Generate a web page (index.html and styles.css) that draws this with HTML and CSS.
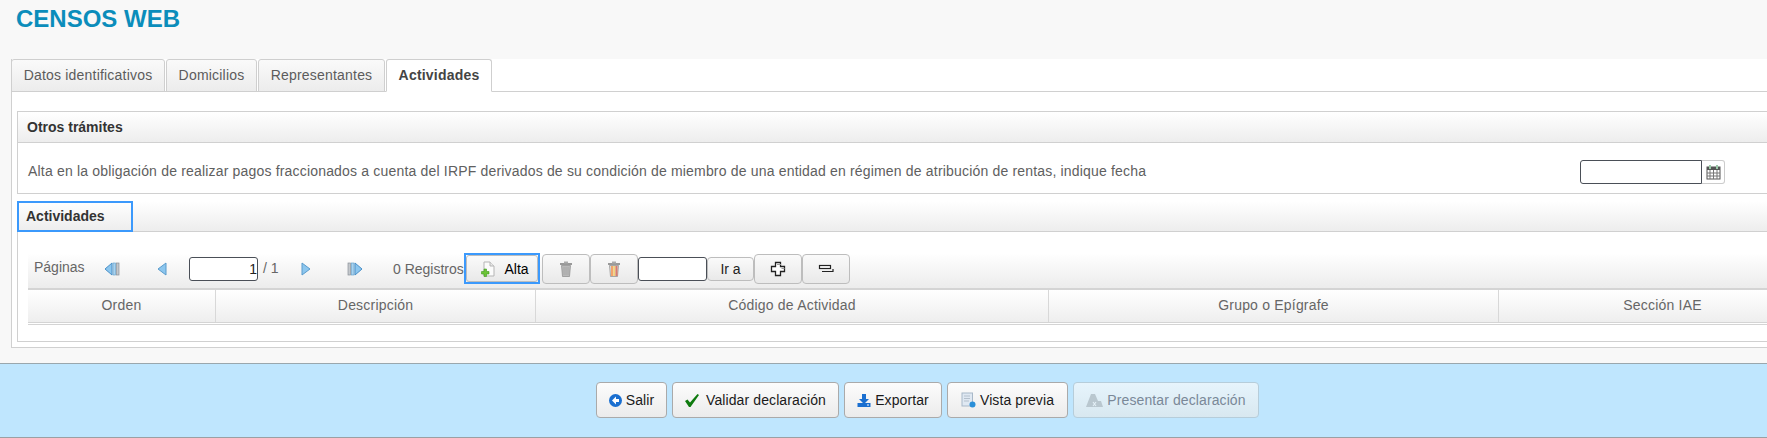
FILE: index.html
```html
<!DOCTYPE html>
<html lang="es">
<head>
<meta charset="utf-8">
<title>Censos Web</title>
<link rel="stylesheet" href="styles.css">
</head>
<body>
<header class="top"><h1 class="title">CENSOS WEB</h1></header>
<main class="sheet">
  <nav class="tabs">
    <a class="tab t1">Datos identificativos</a>
    <a class="tab t2">Domicilios</a>
    <a class="tab t3">Representantes</a>
    <a class="tab t4 active">Actividades</a>
  </nav>
  <div class="content">
    <section class="panel first">
      <h2 class="panel-head">Otros trámites</h2>
      <div class="row">
        <span class="row-text">Alta en la obligación de realizar pagos fraccionados a cuenta del IRPF derivados de su condición de miembro de una entidad en régimen de atribución de rentas, indique fecha</span>
        <span class="date"><input class="date-input" type="text" aria-label="Fecha"><button class="date-btn" aria-label="Calendario"><svg width="15" height="16" viewBox="0 0 15 16"><rect x="1" y="3" width="13" height="12" fill="#fff" stroke="#555"/><rect x="1" y="3" width="13" height="3" fill="#555"/><path d="M1 9h13M1 12h13M4 6v9M7.5 6v9M11 6v9" stroke="#777" fill="none"/><path d="M4 1v4M11 1v4" stroke="#9bc9a8" stroke-width="2"/></svg></button></span>
      </div>
    </section>
    <section class="panel second">
      <h2 class="panel-head"><span class="focus-head">Actividades</span></h2>
      <div class="list">
        <div class="toolbar">
          <span class="lbl pages">Páginas</span>
          <button class="nav n1" aria-label="Primera"><svg width="16" height="14" viewBox="0 0 16 14"><path d="M8 1v12L1 7z" fill="#8cc6ee" stroke="#4a90c8"/><rect x="9" y="1" width="2.5" height="12" fill="#a9d3f0" stroke="#6aa5cf" stroke-width=".7"/><rect x="12.5" y="1" width="2.5" height="12" fill="#c4c8cc" stroke="#8a9098" stroke-width=".7"/></svg></button>
          <button class="nav n2" aria-label="Anterior"><svg width="11" height="14" viewBox="0 0 11 14"><path d="M9 1v12L1 7z" fill="#8cc6ee" stroke="#5a9bcc"/></svg></button>
          <input class="page-input" type="text" value="1" aria-label="Página">
          <span class="lbl of">/ 1</span>
          <button class="nav n3" aria-label="Siguiente"><svg width="11" height="14" viewBox="0 0 11 14"><path d="M2 1v12l8-6z" fill="#8cc6ee" stroke="#5a9bcc"/></svg></button>
          <button class="nav n4" aria-label="Última"><svg width="16" height="14" viewBox="0 0 16 14"><rect x="1" y="1" width="2.5" height="12" fill="#c4c8cc" stroke="#8a9098" stroke-width=".7"/><rect x="4.5" y="1" width="2.5" height="12" fill="#a9d3f0" stroke="#6aa5cf" stroke-width=".7"/><path d="M8 1v12l7-6z" fill="#8cc6ee" stroke="#4a90c8"/></svg></button>
          <span class="lbl regs">0 Registros</span>
          <div class="focus-ring"><button class="btn alta"><svg class="alta-ico" width="14" height="16" viewBox="0 0 14 16"><path d="M3 1h6l4 4v10H3z" fill="#fbfbfb" stroke="#b5b5b5"/><path d="M9 1v4h4" fill="#e8e8e8" stroke="#b5b5b5"/><path d="M3 8h2.500v2.500H8V13H5.500v2.500H3V13H.5v-2.500H3z" fill="#6cc437" stroke="#3f9a1e" stroke-width=".6"/></svg>Alta</button></div>
          <button class="btn tool" aria-label="Borrar"><svg width="14" height="16" viewBox="0 0 14 16"><rect x="1" y="2" width="12" height="2" fill="#999"/><rect x="5" y="0.5" width="4" height="2" fill="#aaa"/><path d="M2.500 4.500h9l-1 11h-7z" fill="#b9b9b9" stroke="#8a8a8a" stroke-width=".7"/><path d="M5 6v8M7 6v8M9 6v8" stroke="#a8a8a8"/></svg></button>
          <button class="btn tool" aria-label="Borrar todo"><svg width="14" height="16" viewBox="0 0 14 16"><rect x="1" y="2" width="12" height="2" fill="#999"/><rect x="5" y="0.5" width="4" height="2" fill="#aaa"/><path d="M2.500 4.500h9l-1 11h-7z" fill="#ddd" stroke="#8a8a8a" stroke-width=".7"/><path d="M5 5v10" stroke="#f2a36b" stroke-width="2"/><path d="M7.300 5v10" stroke="#f3d27a" stroke-width="2"/><path d="M9.500 5v10" stroke="#d97b6c" stroke-width="2"/></svg></button>
          <input class="goto-input" type="text" aria-label="Ir a página">
          <button class="btn goto">Ir a</button>
          <button class="btn tool" aria-label="Expandir"><svg width="16" height="16" viewBox="0 0 16 16"><path d="M5.500 1.500h5v4h4v5h-4v4h-5v-4h-4v-5h4z" fill="#fff" stroke="#222" stroke-width="1.300"/><path d="M7 3.500h4M11.500 7.500h3" stroke="#999"/></svg></button>
          <button class="btn tool" aria-label="Contraer"><svg width="16" height="10" viewBox="0 0 16 10"><rect x="1.500" y="1.500" width="11" height="3" fill="#fff" stroke="#222" stroke-width="1.200"/><path d="M4 7.500h11V5" fill="none" stroke="#222" stroke-width="1.200"/></svg></button>
        </div>
        <div class="table-head">
          <div class="col c1">Orden</div>
          <div class="col c2">Descripción</div>
          <div class="col c3">Código de Actividad</div>
          <div class="col c4">Grupo o Epígrafe</div>
          <div class="col c5">Sección IAE</div>
        </div>
        <div class="table-foot"></div>
      </div>
    </section>
  </div>
</main>
<footer class="actions">
  <button class="act a1"><svg width="13" height="13" viewBox="0 0 13 13"><circle cx="6.500" cy="6.500" r="6.500" fill="#1a6fd0"/><path d="M7 2.500L3 6.500l4 4V8h3V5H7z" fill="#fff"/></svg>Salir</button>
  <button class="act a2"><svg class="chk" width="14" height="13" viewBox="0 0 14 13"><path d="M0 7l2.500-1.500L5 8.500 12.500 0 14 1 5.500 13H4z" fill="#0e7a0e"/></svg>Validar declaración</button>
  <button class="act a3"><svg width="14" height="13" viewBox="0 0 14 13"><path d="M5 0h4v5h3L7 10 2 5h3z" fill="#1a6fd0"/><rect x="0.500" y="9" width="13" height="4" fill="#1a6fd0"/><path d="M10 11h2" stroke="#fff"/></svg>Exportar</button>
  <button class="act a4"><svg width="15" height="16" viewBox="0 0 15 16"><rect x="1" y="1" width="10.500" height="13" fill="#dfe8f2" stroke="#a8b8c8"/><path d="M3 4h6M3 6.500h6M3 9h5" stroke="#b4c0cc"/><circle cx="11.500" cy="12.500" r="3" fill="#2a8fd8"/></svg>Vista previa</button>
  <button class="act a5"><svg width="17" height="13" viewBox="0 0 17 13"><path d="M5 0h4l3 7h3l2 6H0z" fill="#b9c7cf"/><path d="M7 8l3 4M10 8l-3 4" stroke="#e3eff6" stroke-width="1.200"/></svg>Presentar declaración</button>
</footer>
</body>
</html>
```
FILE: styles.css
```css
* { box-sizing: border-box; }
html, body { margin: 0; padding: 0; }
body {
  width: 1767px;
  height: 438px;
  overflow: hidden;
  background: #f8f8f8;
  font-family: "Liberation Sans", Arial, sans-serif;
  font-size: 14px;
  color: #555;
}
button, input { font-family: inherit; }

.top { height: 59px; padding: 5px 0 0 16px; }
.title {
  margin: 0;
  font-size: 24px;
  line-height: 28px;
  font-weight: 700;
  color: #0b8dbb;
}

.sheet {
  width: 1900px;
  height: 289px;
  margin-left: 11px;
  background: #fff;
  border-left: 1px solid #d0d0d0;
  border-bottom: 1px solid #d0d0d0;
}
.tabs {
  display: flex;
  gap: 1px;
  height: 33px;
  position: relative;
  margin-left: -1px;
  border-bottom: 1px solid #d0d0d0;
}
.tab {
  height: 33px;
  border: 1px solid #cfcfcf;
  border-radius: 3px 3px 0 0;
  background: linear-gradient(#fafafa, #ececec);
  font-size: 14px;
  letter-spacing: .2px;
  line-height: 30px;
  text-align: center;
  color: #5c5c5c;
}
.t1 { width: 154px; }
.t2 { width: 91px; }
.t3 { width: 127px; }
.t4 { width: 106px; }
.tab.active {
  background: #fff;
  border-bottom-color: #fff;
  font-weight: 700;
  color: #444;
}

.content { padding: 19px 0 0 5px; }
.panel { border: 1px solid #d0d0d0; border-right: 0; }
.first { height: 83px; margin-bottom: 7px; }
.second { height: 141px; }
.panel-head {
  margin: 0;
  height: 31px;
  border-bottom: 1px solid #d0d0d0;
  background: linear-gradient(#fff, #ededed);
  font-size: 14px;
  line-height: 30px;
  font-weight: 700;
  color: #333;
  padding-left: 9px;
}
.second .panel-head { padding-left: 0; }
.focus-head {
  display: block;
  width: 116px;
  height: 31px;
  margin: -1px 0 0 -1px;
  border: 2px solid #3b99fc;
  padding-left: 7px;
  line-height: 27px;
}

.row {
  display: flex;
  align-items: center;
  height: 50px;
  padding: 1px 0 0 10px;
}
.row-text {
  width: 1552px;
  padding-top: 4px;
  font-size: 14px;
  letter-spacing: .18px;
  color: #606060;
}
.date { display: flex; height: 24px; margin-top: 7px; }
.date-input {
  width: 122px;
  height: 24px;
  border: 1px solid #4a4f57;
  border-radius: 3px 0 0 3px;
  background: #fff;
}
.date-btn {
  display: flex;
  align-items: center;
  justify-content: center;
  width: 23px;
  height: 24px;
  padding: 0;
  border: 1px solid #ccc;
  border-left: 0;
  border-radius: 0 3px 3px 0;
  background: #fff;
}

.list { padding: 21px 0 0 10px; }
.toolbar {
  display: flex;
  align-items: center;
  height: 37px;
  background: linear-gradient(#fff, #ececec);
  border-bottom: 2px solid #d4d4d4;
  padding: 0 0 4px 6px;
}
.lbl { font-size: 14px; color: #666; white-space: nowrap; }
.pages { width: 55px; margin-top: -3px; }
.nav {
  display: flex;
  align-items: center;
  justify-content: center;
  width: 46px;
  height: 30px;
  padding: 0;
  border: 0;
  background: transparent;
}
.n2, .n4 { margin-left: 4px; }
.page-input {
  width: 69px;
  height: 24px;
  margin-left: 4px;
  padding: 0;
  border: 1px solid #4a4f57;
  border-radius: 3px;
  text-align: right;
  font-size: 14px;
  color: #222;
  background: #fff;
}
.of { width: 24px; padding-left: 5px; margin-top: -2px; }
.regs { width: 71px; margin-left: 15px; }

.btn {
  display: flex;
  align-items: center;
  justify-content: center;
  height: 30px;
  padding: 0;
  border: 1px solid #bdbdbd;
  border-radius: 4px;
  background: linear-gradient(#fafafa, #e9e9e9);
  font-size: 14px;
  color: #222;
}
.tool { width: 48px; }
.focus-ring {
  width: 76px;
  height: 31px;
  margin-right: 2px;
  border: 2px solid #3b99fc;
}
.alta {
  width: 100%;
  height: 100%;
  padding-left: 6px;
  border-radius: 3px;
  color: #000;
}
.alta-ico { margin-right: 9px; }
.goto-input {
  width: 69px;
  height: 24px;
  padding: 0;
  border: 1px solid #4a4f57;
  border-radius: 3px;
  background: #fff;
}
.goto { width: 47px; height: 24px; }

.table-head { display: flex; height: 33px; border-bottom: 1px solid #d4d4d4; }
.col {
  height: 32px;
  background: linear-gradient(#fff, #eeeeee);
  border-left: 1px solid #d8d8d8;
  font-size: 14px;
  letter-spacing: .2px;
  line-height: 31px;
  text-align: center;
  color: #666;
}
.c1 { width: 187px; border-left: 0; }
.c2 { width: 320px; }
.c3 { width: 513px; }
.c4 { width: 450px; }
.c5 { width: 328px; }
.table-foot { height: 2px; border-bottom: 1px solid #d4d4d4; }

.actions {
  display: flex;
  justify-content: center;
  gap: 5px;
  height: 75px;
  margin-top: 15px;
  padding: 18px 0 0 88px;
  background: #bfe6fe;
  border-top: 1px solid #9aa7ad;
  border-bottom: 1px solid #9aa0a4;
}
.act {
  display: flex;
  align-items: center;
  justify-content: center;
  gap: 4px;
  height: 36px;
  padding: 0;
  border: 1px solid #aaa;
  border-radius: 4px;
  background: linear-gradient(#fcfcfc, #ebebeb);
  font-size: 14px;
  letter-spacing: .1px;
  color: #1a1a1a;
}
.a1 { width: 71px; }
.a2 { width: 167px; gap: 7px; }
.a3 { width: 98px; }
.a4 { width: 121px; }
.a5 {
  width: 186px;
  border-color: #b6cdda;
  background: linear-gradient(#e6f4fc, #d8e8f0);
  color: #7a8898;
}
```
